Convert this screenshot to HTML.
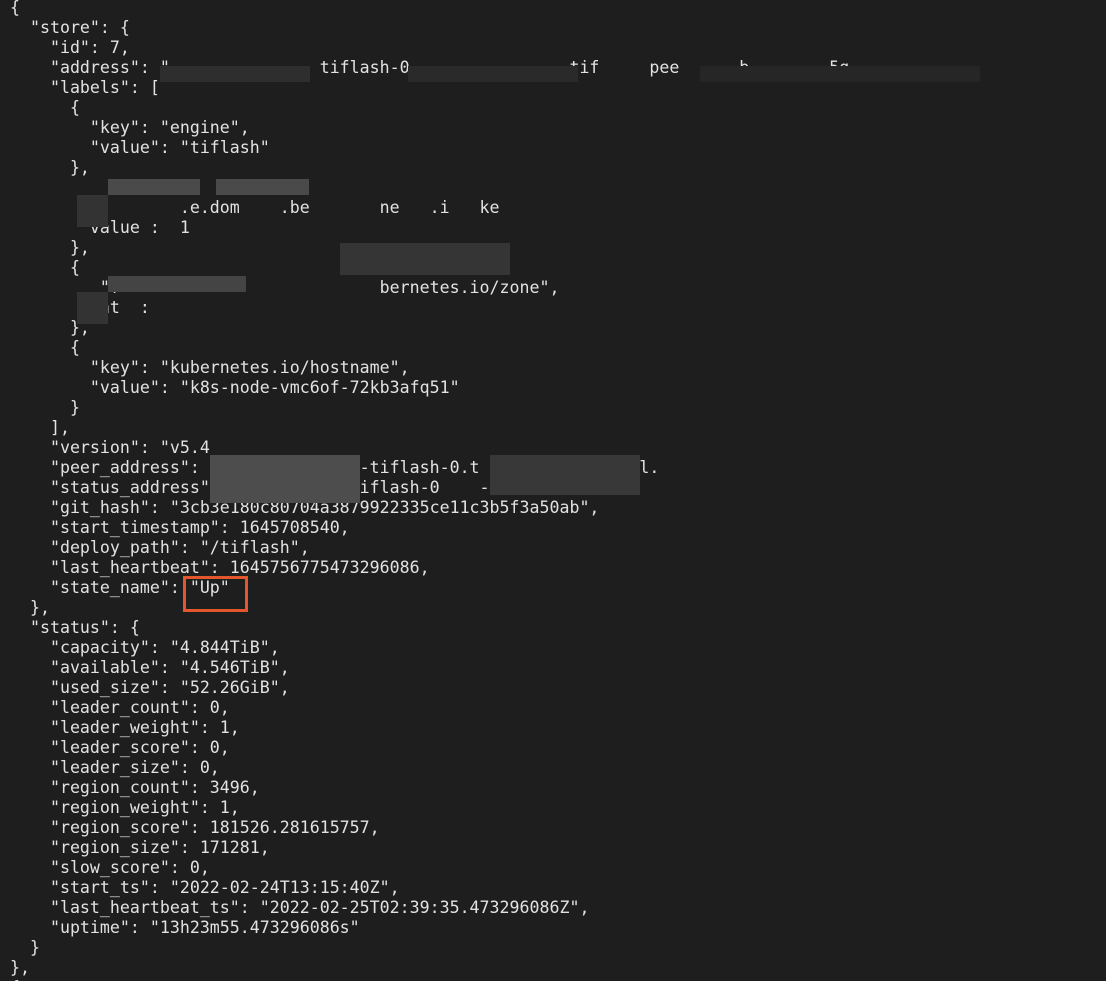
<!DOCTYPE html>
<html><head><meta charset="utf-8"><style>
html,body{margin:0;padding:0;background:#1e1e1e;width:1106px;height:981px;overflow:hidden;position:relative}
pre{position:absolute;left:10px;top:-2px;margin:0;font-family:"DejaVu Sans Mono","Liberation Mono",monospace;font-size:16.6px;line-height:20px;color:#e2e2e2;white-space:pre}
.b{position:absolute;background:#3a3a3a}
.box{position:absolute;left:183px;top:576px;width:59px;height:30px;border:3px solid #e2572b}
</style></head><body>
<pre>{
  "store": {
    "id": 7,
    "address": "               tiflash-0                tif     pee      b        5g
    "labels": [
      {
        "key": "engine",
        "value": "tiflash"
      },

                 .e.dom    .be       ne   .i   ke
        value :  1
      },
      {
         "f                          bernetes.io/zone",
        "at  :
      },
      {
        "key": "kubernetes.io/hostname",
        "value": "k8s-node-vmc6of-72kb3afq51"
      }
    ],
    "version": "v5.4
    "peer_address": "             l-tiflash-0.t                l.
    "status_address": "          -tiflash-0    -(
    "git_hash": "3cb3e180c80704a3879922335ce11c3b5f3a50ab",
    "start_timestamp": 1645708540,
    "deploy_path": "/tiflash",
    "last_heartbeat": 1645756775473296086,
    "state_name": "Up"
  },
  "status": {
    "capacity": "4.844TiB",
    "available": "4.546TiB",
    "used_size": "52.26GiB",
    "leader_count": 0,
    "leader_weight": 1,
    "leader_score": 0,
    "leader_size": 0,
    "region_count": 3496,
    "region_weight": 1,
    "region_score": 181526.281615757,
    "region_size": 171281,
    "slow_score": 0,
    "start_ts": "2022-02-24T13:15:40Z",
    "last_heartbeat_ts": "2022-02-25T02:39:35.473296086Z",
    "uptime": "13h23m55.473296086s"
  }
},
{</pre>
<div class="b" style="left:160px;top:66px;width:150px;height:16px;background:#2e2e2e"></div>
<div class="b" style="left:408px;top:66px;width:170px;height:16px;background:#2a2a2a"></div>
<div class="b" style="left:700px;top:66px;width:280px;height:16px;background:#262626"></div>
<div class="b" style="left:108px;top:179px;width:92px;height:16px;background:#4a4a4a"></div>
<div class="b" style="left:216px;top:179px;width:93px;height:16px;background:#4a4a4a"></div>
<div class="b" style="left:77px;top:195px;width:31px;height:32px;background:#333"></div>
<div class="b" style="left:340px;top:243px;width:170px;height:32px;background:#353535"></div>
<div class="b" style="left:108px;top:276px;width:138px;height:16px;background:#444"></div>
<div class="b" style="left:77px;top:292px;width:31px;height:32px;background:#333"></div>
<div class="b" style="left:210px;top:455px;width:150px;height:48px;background:#4d4d4d"></div>
<div class="b" style="left:490px;top:455px;width:150px;height:40px;background:#383838"></div>
<div class="box"></div>
</body></html>
